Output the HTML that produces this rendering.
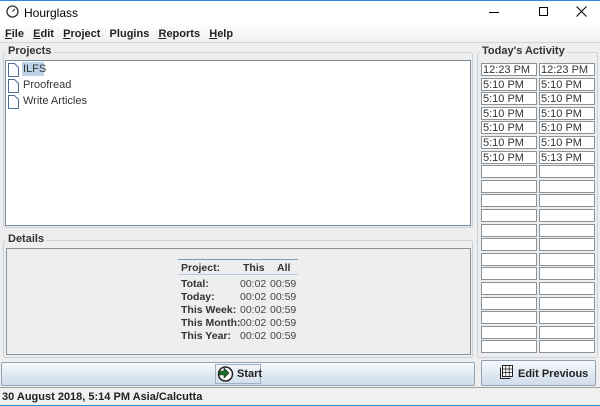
<!DOCTYPE html><html><head><style>
*{margin:0;padding:0;box-sizing:border-box}
body{width:600px;height:406px;background:#eeeeee;font-family:"Liberation Sans",sans-serif;font-size:11px;color:#333;position:relative;overflow:hidden}
.a{position:absolute}
.b{font-weight:bold}
.fs{position:absolute;border:1px solid #c8d2dc;border-radius:3px}
.lg{position:absolute;background:#eeeeee;padding:0 2px;font-weight:bold;color:#333;font-size:11px}
.cell{position:absolute;width:56px;height:13px;background:#fff;border:1px solid #8a929a;font-size:11px;line-height:12px;padding-left:1px;color:#333}
.btn{position:absolute;border:1px solid #8fa1b3;border-radius:2px;background:linear-gradient(#f6f9fc,#dde7f1 60%,#cfdceb)}
.t{font-size:10.5px}
</style></head><body>
<div class="a" style="left:0;top:0;width:600px;height:24px;background:#fff;border-top:1px solid #2b8de0"></div>
<svg class="a" style="left:6px;top:5px" width="13" height="13"><circle cx="6.5" cy="6.5" r="5.5" fill="none" stroke="#333" stroke-width="1.3"/><path d="M6.5 6.5L9 4" stroke="#333" stroke-width="1.2"/></svg>
<div class="a" style="left:24px;top:6px;font-size:12px;color:#000">Hourglass</div>
<div class="a" style="left:489px;top:12px;width:10px;height:1px;background:#000"></div>
<div class="a" style="left:539px;top:7px;width:9px;height:9px;border:1px solid #000"></div>
<svg class="a" style="left:576px;top:6px" width="11" height="11"><path d="M0.5 0.5L10.5 10.5M10.5 0.5L0.5 10.5" stroke="#000" stroke-width="1"/></svg>
<div class="a" style="left:0;top:24px;width:600px;height:19px;background:linear-gradient(#fff,#eef0f2);border-bottom:1px solid #d6d6d6"></div>
<div class="a b" style="left:5px;top:28px;font-size:11px;color:#222"><u>F</u>ile&nbsp;&nbsp;&nbsp;<u>E</u>dit&nbsp;&nbsp;&nbsp;<u>P</u>roject&nbsp;&nbsp;&nbsp;Plu<u>g</u>ins&nbsp;&nbsp;&nbsp;<u>R</u>eports&nbsp;&nbsp;&nbsp;<u>H</u>elp</div>
<div class="fs" style="left:3px;top:52px;width:470px;height:176px"></div>
<div class="lg" style="left:6px;top:45px">Projects</div>
<div class="a" style="left:5px;top:60px;width:466px;height:166px;background:#fff;border:1px solid #7a8a99"></div>
<svg class="a" style="left:8px;top:63px" width="11" height="46"><g fill="#fff" stroke="#4a6d9c" stroke-width="1"><path d="M0.5 0.5H6.5L10.5 4.5V13.5H0.5Z"/><path d="M0.5 16.5H6.5L10.5 20.5V29.5H0.5Z"/><path d="M0.5 32.5H6.5L10.5 36.5V45.5H0.5Z"/></g></svg>
<div class="a" style="left:22px;top:62px;width:22px;height:14px;background:#bcd3ea"></div>
<div class="a" style="left:23px;top:63px;font-size:11px;color:#333">ILFS</div>
<div class="a" style="left:23px;top:79px;font-size:11px;color:#333">Proofread</div>
<div class="a" style="left:23px;top:95px;font-size:11px;color:#333">Write Articles</div>
<div class="fs" style="left:3px;top:240px;width:470px;height:118px"></div>
<div class="lg" style="left:6px;top:233px">Details</div>
<div class="a" style="left:6px;top:248px;width:465px;height:107px;border:1px solid #8a929a;background:#eeeeee"></div>
<div class="a" style="left:178px;top:259px;width:120px;height:1px;background:#6f9ac8"></div>
<div class="a" style="left:178px;top:274px;width:120px;height:1px;background:#b5cbe3"></div>
<div class="a b t" style="left:181px;top:262px">Project:</div><div class="a b t" style="left:243px;top:262px">This</div><div class="a b t" style="left:277px;top:262px">All</div>
<div class="a t" style="left:181px;top:278px;line-height:13px"><b>Total:<br>Today:<br>This Week:<br>This Month:<br>This Year:</b></div>
<div class="a t" style="left:240px;top:278px;line-height:13px;color:#444">00:02<br>00:02<br>00:02<br>00:02<br>00:02</div>
<div class="a t" style="left:270px;top:278px;line-height:13px;color:#444">00:59<br>00:59<br>00:59<br>00:59<br>00:59</div>
<div class="btn" style="left:1px;top:362px;width:474px;height:24px"></div>
<div class="a" style="left:215px;top:364px;width:46px;height:20px;border:1px solid #9fb0c4"></div>
<svg class="a" style="left:217px;top:366px" width="17" height="16"><circle cx="8.5" cy="8" r="7" fill="#fff" stroke="#222" stroke-width="1.5"/><path d="M2 5H7V2L12 7L7 12V9H2Z" fill="#1f6b2a" stroke="#0a2a10" stroke-width="0.6"/></svg>
<div class="a b" style="left:237px;top:368px;color:#222">Start</div>
<div class="fs" style="left:477px;top:52px;width:121px;height:306px"></div>
<div class="lg" style="left:480px;top:45px">Today's Activity</div>
<div id="cells"></div>
<div class="btn" style="left:481px;top:360px;width:115px;height:26px"></div>
<svg class="a" style="left:500px;top:365px" width="13" height="14"><rect x="2.5" y="0.5" width="10" height="11" fill="#fff" stroke="#222"/><path d="M2.5 4H12.5M2.5 7.5H12.5M5.8 0.5V11.5M9.2 0.5V11.5" stroke="#222" stroke-width="0.8"/><path d="M0.5 2.5V13.5H10.5" fill="none" stroke="#222"/></svg>
<div class="a b" style="left:518px;top:368px;color:#222">Edit Previous</div>
<div class="a" style="left:0;top:387px;width:600px;height:1px;background:#a0a0a0"></div>
<div class="a" style="left:0;top:388px;width:600px;height:17px;background:#f0f0f0"></div>
<div class="a b" style="left:2px;top:391px;color:#222">30 August 2018, 5:14 PM Asia/Calcutta</div>
<div class="a" style="left:0;top:405px;width:600px;height:1px;background:#2b8de0"></div>
<script>
var L=["12:23 PM","5:10 PM","5:10 PM","5:10 PM","5:10 PM","5:10 PM","5:10 PM"],R=["12:23 PM","5:10 PM","5:10 PM","5:10 PM","5:10 PM","5:10 PM","5:13 PM"],h="";
for(var i=0;i<20;i++){var y=63+i*14.6;h+='<div class="cell" style="left:481px;top:'+y+'px">'+(L[i]||"")+'</div><div class="cell" style="left:539px;top:'+y+'px">'+(R[i]||"")+'</div>';}
document.getElementById("cells").innerHTML=h;
</script>
</body></html>
